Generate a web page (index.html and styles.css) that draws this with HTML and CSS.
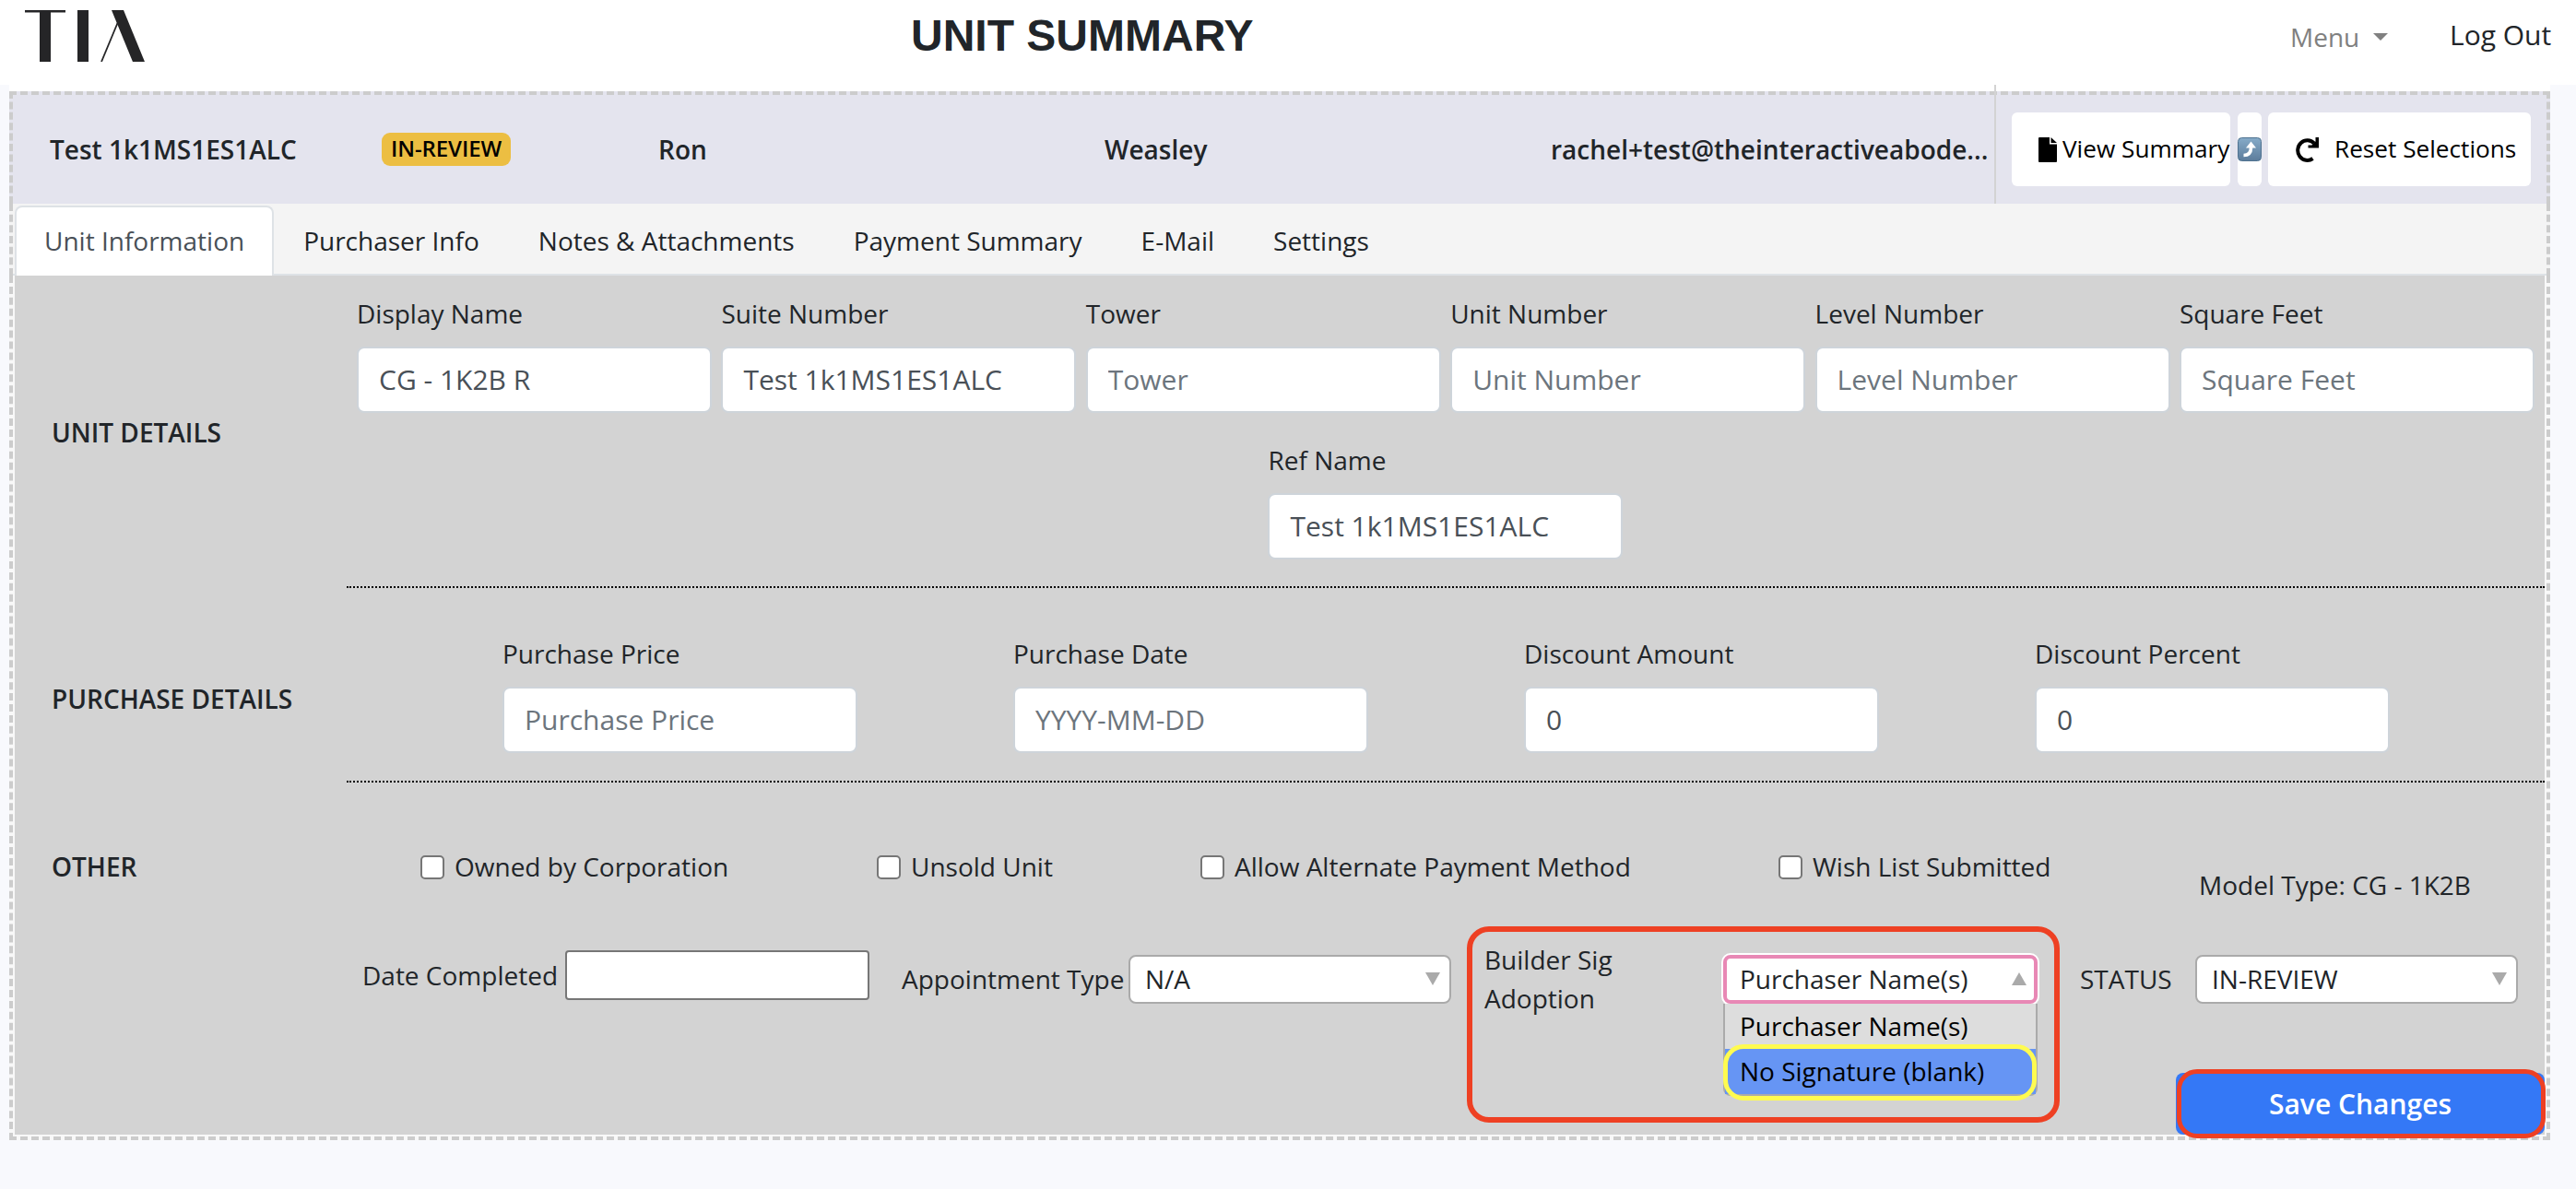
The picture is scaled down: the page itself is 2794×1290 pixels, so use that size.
FILE: index.html
```
<!DOCTYPE html>
<html lang="en">
<head>
    <meta charset="UTF-8">
    <meta name="viewport" content="width=device-width, initial-scale=1.0">
    <title>Unit Summary</title>
    <link rel="stylesheet" href="styles.css">
</head>
<body>
    <header class="navbar">
        <svg class="logo" width="132" height="56" viewBox="0 0 132 56">
            <rect x="0" y="0" width="44" height="2.5"/>
            <rect x="16" y="0" width="12" height="56"/>
            <rect x="57" y="0" width="12" height="56"/>
            <rect x="94" y="0" width="13" height="56" transform="skewX(22.3)"/>
            <line x1="83" y1="56" x2="100.5" y2="14"/>
        </svg>
        <h1>UNIT SUMMARY</h1>
        <a href="#" class="menu-link">Menu <span class="caret"></span></a>
        <a href="#" class="logout-link">Log Out</a>
    </header>

    <main class="unit">
        <div class="unit-header">
            <div class="unit-name">Test 1k1MS1ES1ALC</div>
            <div class="unit-badge"><span class="badge">IN-REVIEW</span></div>
            <div>Ron</div>
            <div>Weasley</div>
            <div>rachel+test@theinteractiveabode...</div>
            <div class="actions">
                <button class="btn view">
                    <svg width="20" height="27" viewBox="0 0 20 27"><path d="M1 0H12V7.5H20V26Q20 27 19 27H1Q0 27 0 26V1Q0 0 1 0ZM13.5 0L20 6H13.5Z"/></svg>
                    <span>View Summary</span>
                </button>
                <button class="btn share">
                    <svg width="26" height="26" viewBox="0 0 26 26">
                        <defs>
                            <linearGradient id="tile" x1="0" y1="0" x2="0" y2="1">
                                <stop offset="0" stop-color="#86abc8"/>
                                <stop offset="1" stop-color="#5c7c9b"/>
                            </linearGradient>
                        </defs>
                        <rect x="0.5" y="0.5" width="25" height="25" rx="4" fill="url(#tile)" stroke="#4f7290"/>
                        <path d="M6.5 19.5C11.5 19.5 14.5 17 14.5 11" fill="none" stroke="#fff" stroke-width="3.6"/>
                        <path d="M9 11.5L14.5 4.5L20 11.5Z" fill="#fff"/>
                    </svg>
                </button>
                <button class="btn reset">
                    <svg width="27" height="27" viewBox="0 0 27 27">
                        <path d="M19.5 23A10.4 10.8 0 1 1 21 6.5" fill="none" stroke="#000" stroke-width="4"/>
                        <path d="M26 0V11.5H14.5V8.5H18.5L22.5 4.5V0Z"/>
                    </svg>
                    <span>Reset Selections</span>
                </button>
            </div>
        </div>

        <ul class="tabs">
            <li class="active">Unit Information</li>
            <li>Purchaser Info</li>
            <li>Notes &amp; Attachments</li>
            <li>Payment Summary</li>
            <li>E-Mail</li>
            <li>Settings</li>
        </ul>

        <form class="tab-content">
            <section class="section">
                <h2>UNIT DETAILS</h2>
                <div class="fields unit-fields">
                    <div class="field">
                        <label for="display">Display Name</label>
                        <input type="text" id="display" value="CG - 1K2B R">
                    </div>
                    <div class="field">
                        <label for="suite">Suite Number</label>
                        <input type="text" id="suite" value="Test 1k1MS1ES1ALC">
                    </div>
                    <div class="field">
                        <label for="tower">Tower</label>
                        <input type="text" id="tower" placeholder="Tower">
                    </div>
                    <div class="field">
                        <label for="unit">Unit Number</label>
                        <input type="text" id="unit" placeholder="Unit Number">
                    </div>
                    <div class="field">
                        <label for="level">Level Number</label>
                        <input type="text" id="level" placeholder="Level Number">
                    </div>
                    <div class="field">
                        <label for="feet">Square Feet</label>
                        <input type="text" id="feet" placeholder="Square Feet">
                    </div>
                    <div class="field">
                        <label for="ref">Ref Name</label>
                        <input type="text" id="ref" value="Test 1k1MS1ES1ALC">
                    </div>
                </div>
            </section>

            <section class="section purchase">
                <h2>PURCHASE DETAILS</h2>
                <div class="fields purchase-fields">
                    <div class="field">
                        <label for="price">Purchase Price</label>
                        <input type="text" id="price" placeholder="Purchase Price">
                    </div>
                    <div class="field">
                        <label for="pdate">Purchase Date</label>
                        <input type="text" id="pdate" placeholder="YYYY-MM-DD">
                    </div>
                    <div class="field">
                        <label for="amount">Discount Amount</label>
                        <input type="text" id="amount" value="0">
                    </div>
                    <div class="field">
                        <label for="percent">Discount Percent</label>
                        <input type="text" id="percent" value="0">
                    </div>
                </div>
            </section>

            <section class="section other">
                <h2>OTHER</h2>
                <div class="other-content">
                    <div class="checks">
                        <label><input type="checkbox">Owned by Corporation</label>
                        <label><input type="checkbox">Unsold Unit</label>
                        <label><input type="checkbox">Allow Alternate Payment Method</label>
                        <label><input type="checkbox">Wish List Submitted</label>
                        <div class="model">Model Type: CG - 1K2B</div>
                    </div>
                    <div class="selects">
                        <label class="completed" for="completed">Date Completed</label>
                        <input type="text" class="completed-input" id="completed">
                        <span class="select-label">Appointment Type</span>
                        <div class="select">N/A<span class="arrow">
                            <svg width="16" height="14"><path d="M0 0H16L8 14Z"/></svg></span>
                        </div>
                        <div class="builder">
                            <div class="builder-label">Builder Sig Adoption</div>
                            <div class="select open">Purchaser Name(s)<span class="arrow">
                                <svg width="16" height="14"><path d="M0 14H16L8 0Z"/></svg></span>
                                <ul class="options">
                                    <li>Purchaser Name(s)</li>
                                    <li class="hover">No Signature (blank)</li>
                                </ul>
                                <div class="mark-option"></div>
                            </div>
                        </div>
                        <span class="select-label status">STATUS</span>
                        <div class="select">IN-REVIEW<span class="arrow">
                            <svg width="16" height="14"><path d="M0 0H16L8 14Z"/></svg></span>
                        </div>
                    </div>
                    <div class="save-box">
                        <button type="button" class="save">Save Changes</button>
                    </div>
                </div>
            </section>
        </form>
    </main>
</body>
</html>
```
FILE: styles.css
```
* {
    box-sizing: border-box;
}

body {
    font-family: "Open Sans", "Noto Sans", sans-serif;
    font-size: 28px;
    line-height: 42px;
    color: #212529;
    background-color: #f8f9fd;
    margin: 0;
}

h1, h2, ul {
    margin: 0;
    padding: 0;
    list-style: none;
}

a {
    text-decoration: none;
    white-space: nowrap;
}

input, button {
    font-family: inherit;
    margin: 0;
}

.navbar {
    display: grid;
    grid-template-columns: 961px 1526px 173px 1fr;
    height: 92px;
    padding-left: 27px;
    background-color: #fff;
}

.logo {
    margin-top: 11px;
    fill: #252527;
}

.logo line {
    stroke: #252527;
    stroke-width: 1.8;
}

.navbar h1 {
    font-family: "Liberation Sans", Arial, sans-serif;
    font-size: 48px;
    line-height: 56px;
    padding-top: 11px;
    white-space: nowrap;
}

.menu-link {
    margin-left: -30px;
    padding-top: 19px;
    color: #808080;
}

.caret {
    display: inline-block;
    margin-left: 7px;
    vertical-align: 7px;
    border: 8px solid transparent;
    border-top-color: #808080;
    border-bottom: 0;
}

.logout-link {
    margin-left: -30px;
    padding-top: 17px;
    font-size: 30px;
    color: #212529;
}

/* unit panel */
.unit {
    width: 2756px;
    height: 1145px;
    margin-left: 10px;
    padding-top: 7px;
    background: linear-gradient(#fff 9px, transparent 9px);
}

.unit-header {
    display: grid;
    grid-template-columns: 360px 300px 484px 484px 481px 1fr;
    align-items: center;
    height: 122px;
    padding-left: 40px;
    font-weight: 600;
    background-color: #e4e4ee;
    border: 4px dashed #ccc;
    border-bottom: 0;
}

.unit-badge {
    display: flex;
    margin-top: -1px;
}

.badge {
    height: 36px;
    padding: 0 10px;
    font-size: 24px;
    line-height: 34px;
    letter-spacing: -0.1px;
    color: #000;
    background-color: #ecbe42;
    border-radius: 9px;
}

.actions {
    display: flex;
    height: 129px;
    margin-top: -11px;
    padding: 30px 0 0 17px;
    border-left: 2px solid #d3d3d3;
}

.btn {
    display: flex;
    align-items: center;
    height: 80px;
    border: 0;
    border-radius: 6px;
    padding: 0;
    background-color: #fff;
    color: #000;
    font-size: 26.2px;
    white-space: nowrap;
}

.btn svg {
    flex: none;
}

.btn span {
    margin-top: -2px;
}

.view {
    width: 237px;
    padding-left: 29px;
    gap: 6px;
}

.share {
    width: 26px;
    margin-left: 8px;
}

.reset {
    width: 285px;
    margin-left: 7px;
    padding-left: 29px;
    gap: 16px;
}

.tabs {
    display: flex;
    height: 78px;
    padding: 2px 2px 0;
    background: linear-gradient(#dee2e6, #dee2e6) bottom / 100% 2px no-repeat #f4f4f4;
    border: 4px dashed #ccc;
    border-width: 0 4px;
}

.tabs li {
    padding: 15px 30px 0;
    border: 2px solid transparent;
}

.tabs .active {
    color: #495057;
    background-color: #fff;
    border-color: #dee2e6;
    border-bottom: 0;
    border-radius: 8px 8px 0 0;
}

.tab-content {
    height: 938px;
    padding: 0 2px 2px;
    background-color: #f8f8f8;
    border: 4px dashed #ccc;
    border-top: 0;
}

.section {
    display: grid;
    grid-template-columns: 360px 1fr;
    align-items: center;
    background-color: #d3d3d3;
}

.section h2 {
    padding-left: 40px;
    font-size: 28px;
    font-weight: 600;
}

.purchase h2 {
    padding-top: 29px;
}

.fields {
    display: grid;
    align-content: start;
    border-bottom: 2px dotted #000;
}

.unit-fields {
    grid-template-columns: repeat(6, 385px);
    column-gap: 10.4px;
    row-gap: 30px;
    height: 339px;
    padding: 20px 0 0 11px;
}

.unit-fields .field:last-child {
    grid-column: 3 / 5;
    justify-self: center;
    width: 385px;
}

.purchase-fields {
    grid-template-columns: repeat(4, 385px);
    column-gap: 169px;
    height: 211px;
    padding: 50px 0 0 169px;
}

.field label {
    display: block;
    margin-bottom: 15px;
}

.field input {
    display: block;
    width: 100%;
    height: 72px;
    padding: 0 22px 2px;
    font-size: 30px;
    color: #495057;
    background-color: #fff;
    border: 2px solid #ced4da;
    border-radius: 8px;
}

.field input::placeholder {
    color: #6c757d;
    opacity: 1;
}

/* other */
.other {
    align-items: start;
    height: 382px;
}

.other h2 {
    padding-top: 70px;
}

.checks {
    display: grid;
    grid-template-columns: 495px 351px 627px 456px 1fr;
    align-items: start;
    height: 132px;
    padding: 70px 0 0 80px;
}

.checks label {
    display: flex;
    align-items: center;
    gap: 11px;
}

.checks input {
    appearance: none;
    width: 26px;
    height: 26px;
    margin-top: 2px;
    background-color: #fff;
    border: 2px solid #767676;
    border-radius: 5px;
}

.model {
    padding-top: 20px;
}

.selects {
    display: grid;
    grid-template-columns: 220px 365px 246px 367px 665px 125px 350px;
    align-items: start;
    height: 159px;
    margin-top: 24px;
    padding-left: 17px;
}

.completed {
    margin-top: 32px;
}

.completed-input {
    width: 330px;
    height: 54px;
    margin-top: 26px;
    background-color: #fff;
    border: 2px solid #767676;
    border-radius: 4px;
}

.select-label {
    margin-top: 36px;
}

.select {
    position: relative;
    width: 350px;
    height: 53px;
    margin-top: 31px;
    padding-left: 16px;
    line-height: 48px;
    background-color: #fff;
    border: 2px solid #aaa;
    border-radius: 8px;
}

.arrow {
    position: absolute;
    right: 10px;
    top: 17px;
    line-height: 0;
    fill: #aaa;
}

.builder {
    display: flex;
    justify-content: space-between;
    width: 643px;
    height: 213px;
    border: 6px solid #ee4023;
    border-radius: 24px;
}

.builder-label {
    width: 150px;
    margin: 9px 0 0 13px;
}

.select.open {
    width: 341px;
    margin: 25px 18px 0 0;
    padding-left: 14px;
    line-height: 45px;
    border: 4px solid #e888b5;
    box-shadow: 0 0 0 2px #fff;
}

.open .arrow {
    right: 8px;
    top: 15px;
}

.options {
    position: absolute;
    left: -4px;
    top: 49px;
    width: 341px;
    height: 100px;
    line-height: 48px;
    color: #000;
    background-color: #ddd;
    border: 2px solid #aaa;
    border-top: 0;
    border-radius: 0 0 8px 8px;
}

.options li {
    height: 49px;
    padding-left: 16px;
}

.options .hover {
    background-color: #6695f4;
}

.mark-option {
    position: absolute;
    left: -4px;
    top: 93px;
    width: 340px;
    height: 61px;
    border: 5px solid #fffb50;
    border-radius: 22px;
}

.save-box {
    position: relative;
    width: 400px;
    height: 67px;
    margin-left: auto;
}

.save {
    width: 400px;
    height: 67px;
    padding: 0;
    font-size: 30px;
    font-weight: 600;
    color: #fff;
    background-color: #3478f6;
    border: 0;
    border-radius: 8px;
}

/* outline over the button */
.save-box::after {
    content: "";
    box-sizing: border-box;
    position: absolute;
    left: 1px;
    top: -4px;
    width: 400px;
    height: 75px;
    border: 5px solid #ee4023;
    border-radius: 22px;
}
```
